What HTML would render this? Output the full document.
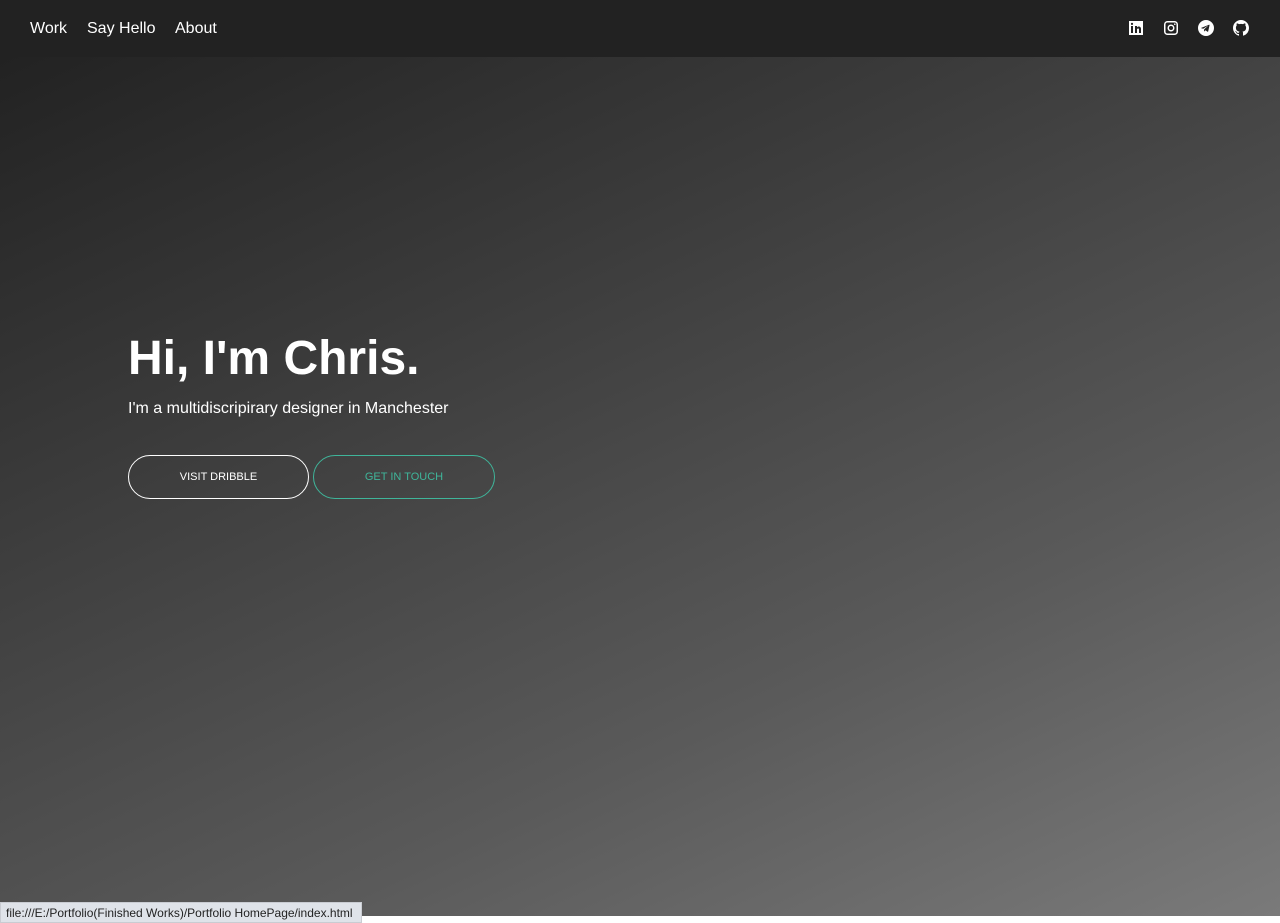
<!DOCTYPE html>
<html><head><meta charset="utf-8"><style>
*{margin:0;padding:0;box-sizing:border-box}
html,body{width:1280px;height:923px;overflow:hidden;background:#fff;font-family:"Liberation Sans",Arial,sans-serif}
.page{position:absolute;left:0;top:0;width:1280px;height:916px;background:linear-gradient(155deg,#1f1f1f 0%,#3c3c3c 35%,#5a5a5a 70%,#7a7a7a 100%)}
nav{position:absolute;left:0;top:0;width:1280px;height:57px;background:#222}
nav .l{position:absolute;left:30px;top:20px;color:#fff;font-size:16px;white-space:nowrap}
nav .l span{position:absolute;top:0}
nav .r{position:absolute;right:31px;top:20px;display:flex;gap:19px}
nav .r svg{width:16px;height:16px;fill:#fff}
h1{position:absolute;left:128px;top:331px;color:#fff;font-size:48px;font-weight:bold}
p.sub{position:absolute;left:128px;top:400px;color:#fff;font-size:16px}
.btn{position:absolute;top:455px;height:44px;border-radius:22px;font-size:11px;display:flex;align-items:center;justify-content:center}
.b1{left:128px;width:181px;border:1px solid #fff;color:#fff}
.b2{left:313px;width:182px;border:1px solid #3fb59a;color:#3fb59a}
.status{position:absolute;left:0;top:902px;width:362px;height:21px;background:#dfe3e9;border:1px solid #c9ccd2;color:#222;font-size:12px;padding:3px 0 0 5px}
</style></head><body>
<div class="page">
<nav>
<div class="l"><span style="left:0">Work</span><span style="left:57px">Say Hello</span><span style="left:145px">About</span></div>
<div class="r">
<svg viewBox="0 0 16 16"><path d="M1 1h14v14H1z M3 6v7h2V6z M4 2.8a1.1 1.1 0 1 0 0 2.2a1.1 1.1 0 1 0 0-2.2z M7 6v7h2V9.5c0-1.2 2-1.4 2 0V13h2V9c0-3-3.2-3-4-1.6V6z" fill-rule="evenodd"/></svg>
<svg viewBox="0 0 16 16"><path d="M4.5 1h7A3.5 3.5 0 0 1 15 4.5v7a3.5 3.5 0 0 1-3.5 3.5h-7A3.5 3.5 0 0 1 1 11.5v-7A3.5 3.5 0 0 1 4.5 1zm0 1.5a2 2 0 0 0-2 2v7a2 2 0 0 0 2 2h7a2 2 0 0 0 2-2v-7a2 2 0 0 0-2-2zM8 4.5a3.5 3.5 0 1 1 0 7a3.5 3.5 0 1 1 0-7zm0 1.5a2 2 0 1 0 0 4a2 2 0 1 0 0-4zm3.8-2.6a.8.8 0 1 1 0 1.6a.8.8 0 1 1 0-1.6z" fill-rule="evenodd"/></svg>
<svg viewBox="0 0 16 16"><path d="M8 0a8 8 0 1 1 0 16A8 8 0 1 1 8 0zM3.5 7.8l7.5-3c.4-.1.6.1.5.6l-1.3 6c-.1.4-.4.5-.7.3l-2-1.5-1 1c-.1.1-.3.2-.5.1l.2-2 3.600-3.3c.2-.2 0-.2-.2-.1L5.2 8.8 3.4 8.3c-.4-.1-.4-.4.1-.5z" fill-rule="evenodd"/></svg>
<svg viewBox="0 0 16 16"><path d="M8 0C3.58 0 0 3.58 0 8c0 3.54 2.29 6.53 5.47 7.59.4.07.55-.17.55-.38v-1.34c-2.23.48-2.7-1.07-2.7-1.07-.36-.92-.89-1.17-.89-1.17-.73-.5.06-.49.06-.49.8.06 1.23.83 1.23.83.71 1.22 1.87.87 2.33.66.07-.52.28-.87.5-1.07-1.78-.2-3.64-.89-3.64-3.95 0-.87.31-1.59.82-2.15-.08-.2-.36-1.02.08-2.12 0 0 .67-.21 2.2.82a7.6 7.6 0 0 1 4 0c1.53-1.04 2.2-.82 2.2-.82.44 1.1.16 1.92.08 2.12.51.56.82 1.27.82 2.15 0 3.07-1.87 3.75-3.65 3.95.29.25.54.73.54 1.48v2.2c0 .21.15.46.55.38A8 8 0 0 0 16 8c0-4.42-3.58-8-8-8z"/></svg>
</div>
</nav>
<h1>Hi, I'm Chris.</h1>
<p class="sub">I'm a multidiscripirary designer in Manchester</p>
<div class="btn b1">VISIT DRIBBLE</div>
<div class="btn b2">GET IN TOUCH</div>
</div>
<div class="status">file:///E:/Portfolio(Finished Works)/Portfolio HomePage/index.html</div>
</body></html>
